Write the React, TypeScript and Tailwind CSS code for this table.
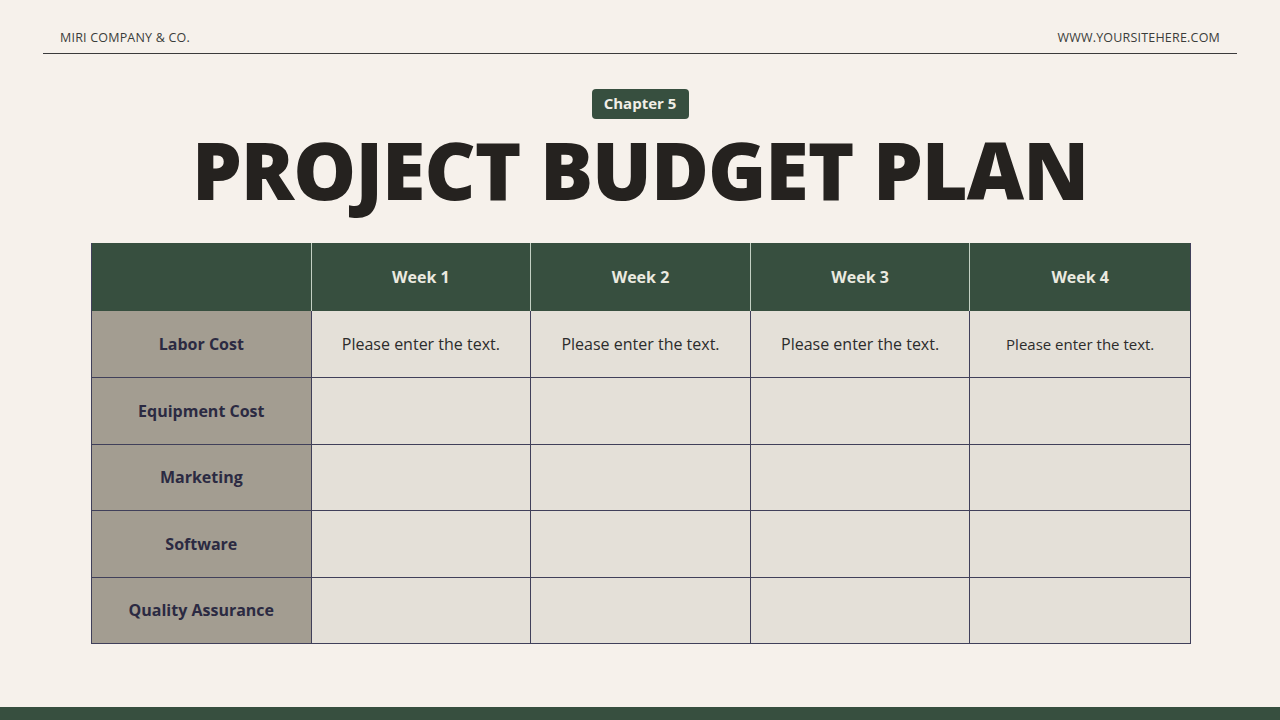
import React from 'react';

const weeks = ['Week 1', 'Week 2', 'Week 3', 'Week 4'];
const rows = ['Labor Cost', 'Equipment Cost', 'Marketing', 'Software', 'Quality Assurance'];

export default function App() {
  return (
    <div className="w-[1280px] h-[720px] bg-[#f6f1eb] flex flex-col overflow-hidden" style={{ fontFamily: "'Open Sans', sans-serif" }}>
      {/* Top bar */}
      <div className="mx-[43px] h-[54px] border-b border-[#3b3b3b] flex items-end justify-between px-[17px] pb-[5px] text-[12.5px] text-[#3b3d3a] tracking-[0.2px]">
        <span>MIRI COMPANY &amp; CO.</span>
        <span>WWW.YOURSITEHERE.COM</span>
      </div>

      {/* Heading */}
      <div className="flex flex-col items-center mt-[35px]">
        <div className="bg-[#374f3f] text-[#f1eee6] text-[15px] leading-[28px] font-bold rounded-[4px] w-[97px] h-[30px] flex items-center justify-center pb-[2px]">
          Chapter 5
        </div>
        <h1 className="mt-[6px] text-[79px] leading-[90px] font-extrabold text-[#25221f] tracking-[-1px]">
          PROJECT BUDGET PLAN
        </h1>
      </div>

      {/* Table */}
      <div className="mt-[28px] mx-[91px] w-[1100px] grid grid-cols-5 border-l border-b border-r border-[#40405a]">
        <div className="h-[68px] bg-[#374f3f] border-r border-[#c3d0c3]" />
        {weeks.map((w, i) => (
          <div
            key={w}
            className={`h-[68px] bg-[#374f3f] flex items-center justify-center text-[16px] font-bold text-[#ebeae0] ${i < 3 ? 'border-r border-[#c3d0c3]' : ''}`}
          >
            {w}
          </div>
        ))}
        {rows.map((r, ri) => (
          <React.Fragment key={r}>
            <div className={`h-[66.4px] bg-[#a39d91] flex items-center justify-center text-[16px] font-bold text-[#2b2a42] border-r border-[#40405a] ${ri > 0 ? 'border-t' : ''}`}>
              {r}
            </div>
            {weeks.map((w, ci) => (
              <div
                key={w}
                className={`h-[66.4px] bg-[#e4e0d8] flex items-center justify-center text-[#2c2c2c] border-[#40405a] ${ci < 3 ? 'border-r' : ''} ${ri > 0 ? 'border-t' : ''} ${ci === 3 ? 'text-[15px]' : 'text-[16px]'}`}
              >
                {ri === 0 ? 'Please enter the text.' : ''}
              </div>
            ))}
          </React.Fragment>
        ))}
      </div>

      <div className="mt-auto h-[13px] bg-[#374f3f]" />
    </div>
  );
}
